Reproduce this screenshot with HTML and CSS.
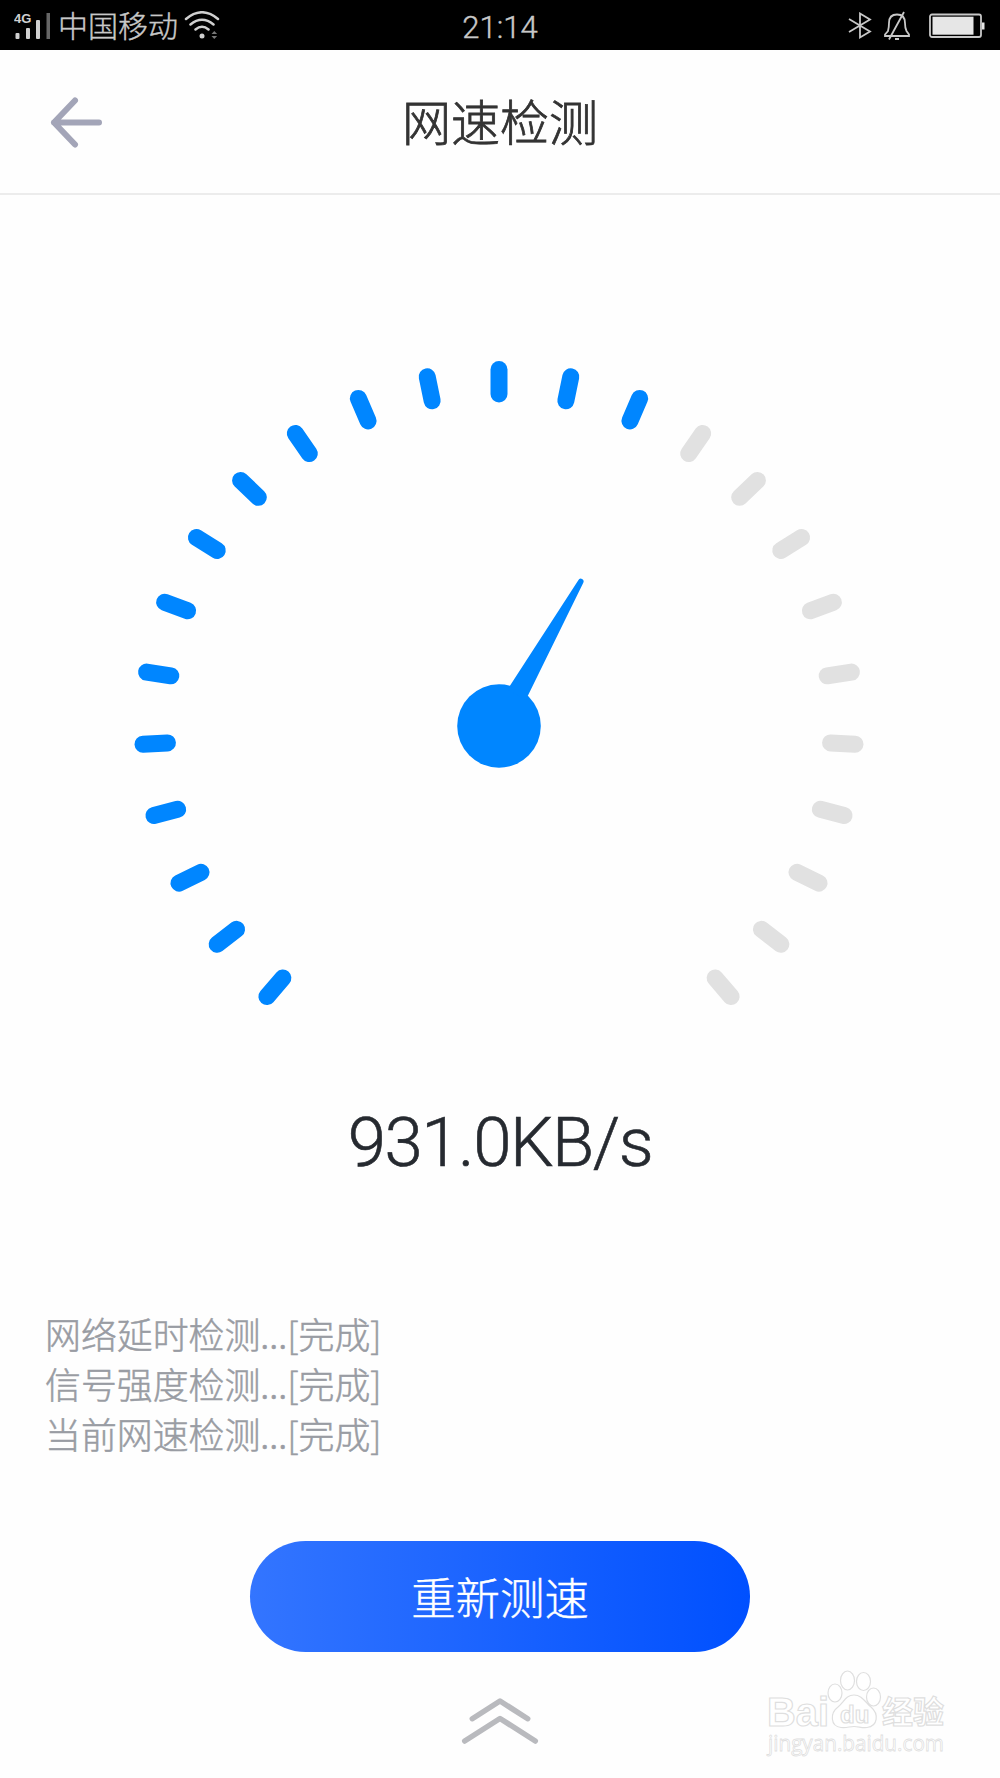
FILE: index.html
```
<!DOCTYPE html>
<html lang="zh-CN">
<head>
    <meta charset="UTF-8">
    <meta name="viewport" content="width=device-width, initial-scale=1.0">
    <title>网速检测</title>
    <link rel="stylesheet" href="styles.css">
</head>
<body>
<div id="wrap">
    <div class="status">
        <div class="st_left">
            <svg class="ic_signal" width="37" height="30" viewBox="0 0 37 30">
                <text x="0" y="12" class="net">4G</text>
                <rect x="1.5" y="22" width="4" height="6" rx="1"/>
                <rect x="12" y="17" width="4" height="11" rx="1"/>
                <rect x="22" y="9" width="4" height="19" rx="1"/>
                <rect x="32.5" y="2" width="3.5" height="26" class="dim"/>
            </svg>
            <span class="carrier">中国移动</span>
            <svg class="ic_wifi" width="36" height="30" viewBox="0 0 36 30">
                <path d="M2 8Q18 -5.500 34 8M6.500 13.500Q18 4 29.500 13.500M11.500 18.500Q18 13 24.500 18.500"/>
                <circle cx="18" cy="25" r="2.500"/>
                <path class="arr" d="M27.500 23l2.800-3 2.800 3zM27.500 25l2.800 3 2.800-3z"/>
            </svg>
        </div>
        <div class="time">21:14</div>
        <div class="st_right">
            <svg class="ic_bt" width="24" height="28" viewBox="0 0 24 28">
                <path d="M1 7L22 19.500 12 25.500V1.500L22 7.500 1 20"/>
            </svg>
            <svg class="ic_bell" width="28" height="30" viewBox="0 0 28 30">
                <path d="M5 20Q6 16 6 12Q6 3.500 14 3.500Q22 3.500 22 12Q22 17 23.500 20L26 23.500V25H2V23.500ZM21 1L6 28.500M12 28H16"/>
            </svg>
            <svg class="ic_bat" width="56" height="26" viewBox="0 0 56 26">
                <rect x="1" y="1.500" width="51" height="22.500" rx="2"/>
                <rect x="3.500" y="3.700" width="41" height="18" class="fill"/>
                <rect x="53" y="9.500" width="2.500" height="7" class="fill"/>
            </svg>
        </div>
    </div>

    <header class="header">
        <svg class="btn_back" width="54" height="52" viewBox="0 0 54 52">
            <path d="M26 4.500L5 26.500L26 48.500M5 26.500H50"/>
        </svg>
        <h1 class="title">网速检测</h1>
    </header>

    <main class="main">
        <svg class="gauge" width="730" height="650" viewBox="-365 -365 730 650">
            <g id="ticks"></g>
            <circle class="needle" r="41.800"/>
            <path class="needle" d="M-10.500 -36L-2.800 -166A2.800 2.800 0 0 1 2.800 -166L10.500 -36Z" transform="rotate(29.500)"/>
        </svg>
        <div class="speed">931.0KB/s</div>
        <ul class="list">
            <li>网络延时检测...[完成]</li>
            <li>信号强度检测...[完成]</li>
            <li>当前网速检测...[完成]</li>
        </ul>
        <button class="btn_test">重新测速</button>
        <svg class="ic_up" width="78" height="48" viewBox="0 0 78 48">
            <path d="M11.300 22.700L39 5L66.700 22.700M3.700 45L39 22.500L74.300 45"/>
        </svg>
    </main>

    <svg class="mark" width="210" height="110" viewBox="0 0 210 110">
        <text x="17" y="66" class="m_bai" textLength="62" lengthAdjust="spacingAndGlyphs">Bai</text>
        <ellipse cx="85" cy="33" rx="7" ry="9"/>
        <ellipse cx="97.500" cy="20.500" rx="7" ry="9.500"/>
        <ellipse cx="113.500" cy="21.500" rx="7" ry="9"/>
        <ellipse cx="123.500" cy="37" rx="7" ry="9"/>
        <path d="M104 35C96 35 94 42 88 47C80 53 80 66 91 67.500C98 68 99 66.500 104 66.500C109 66.500 111 68 117 67.500C128 66 129 54 121 47C115 42 112 35 104 35Z"/>
        <text x="90" y="62.500" class="m_du">du</text>
        <text x="132" y="63" class="m_cn">经验</text>
        <text x="18" y="91" class="m_url" textLength="176" lengthAdjust="spacingAndGlyphs">jingyan.baidu.com</text>
    </svg>
</div>

<script>
    // 25 ticks, the first 15 are lit
    let ticks = document.getElementById('ticks')
    let html = ''
    for(let i=0; i<25; i++) {
        let deg = (i - 12) * 11.615
        html += `<rect class="tick ${i < 15 ? 'on' : ''}" x="-8.500" y="-365" width="17" height="41.500" rx="8.500" transform="rotate(${deg})"/>`
    }
    ticks.innerHTML = html
</script>
</body>
</html>
```
FILE: styles.css
```
body {
    margin: 0;
    background: #fefefe;
    font-family: Roboto, "Noto Sans CJK SC", sans-serif;
    font-weight: 300;
}
ul {
    list-style: none;
    padding: 0;
    margin: 0;
}
svg { display: block; }

#wrap {
    width: 1000px;
    height: 1778px;
    position: relative;
    overflow: hidden;
}

/* status bar */
.status {
    height: 50px;
    box-sizing: border-box;
    padding: 0 15px 0 14px;
    background: #000;
    color: #c8c8c8;
    display: grid;
    grid-template-columns: 1fr auto 1fr;
    align-items: center;
}
.st_left, .st_right {
    display: flex;
    align-items: center;
}
.st_right { justify-content: flex-end; }
.ic_signal { fill: #d0d0d0; }
.ic_signal .net {
    font: bold 13px "Liberation Sans", sans-serif;
}
.ic_signal .dim { fill: #666; }
.carrier {
    margin-left: 7px;
    font-size: 30px;
    line-height: 49px;
    -webkit-text-stroke: 0.4px;
}
.ic_wifi {
    margin-left: 6px;
    fill: #d0d0d0;
}
.ic_wifi path {
    fill: none;
    stroke: #d0d0d0;
    stroke-width: 2.5;
    stroke-linecap: round;
}
.ic_wifi .arr {
    fill: #777;
    stroke: none;
}
.time {
    font-size: 31px;
    line-height: 48px;
    padding: 4px 0 0 1px;
    -webkit-text-stroke: 0.4px;
}
.ic_bt, .ic_bell {
    fill: none;
    stroke: #c8c8c8;
    stroke-width: 1.8;
}
.ic_bell { margin: 0 18px 0 11px; }
.ic_bat {
    margin-bottom: 1px;
    fill: none;
    stroke: #c8c8c8;
    stroke-width: 1.8;
}
.ic_bat .fill {
    fill: #e6e6e6;
    stroke: none;
}

/* header */
.header {
    height: 145px;
    box-sizing: border-box;
    border-bottom: 2px solid #ececec;
    padding: 0 49px;
    display: grid;
    grid-template-columns: 54px 1fr 54px;
    align-items: center;
}
.btn_back {
    fill: none;
    stroke: #a3a5b8;
    stroke-width: 6;
    stroke-linecap: round;
    stroke-linejoin: round;
}
.title {
    margin: 0;
    padding-bottom: 4px;
    text-align: center;
    font-size: 49px;
    font-weight: 300;
    color: #333;
    -webkit-text-stroke: 0.8px;
}

/* content */
.main {
    display: flex;
    flex-direction: column;
    align-items: center;
}
.gauge {
    margin: 166px 2px 0 0;
}
.tick { fill: #e1e1e1; }
.tick.on, .needle { fill: #0086ff; }
.speed {
    margin-top: 92px;
    height: 80px;
    line-height: 80px;
    font-size: 69px;
    letter-spacing: -1.5px;
    color: #262a30;
    -webkit-text-stroke: 0.6px;
}
.list {
    align-self: stretch;
    margin-top: 125px;
    padding-left: 45px;
    font-family: "Noto Sans CJK SC", sans-serif;
    font-size: 35.9px;
    line-height: 50px;
    color: #999ca3;
    -webkit-text-stroke: 0.5px;
}
.list li { height: 50px; }
.btn_test {
    width: 500px;
    height: 111px;
    margin-top: 83px;
    padding: 0 0 2px;
    border: 0;
    border-radius: 56px;
    background: linear-gradient(90deg, #3375ff, #0050ff);
    color: #fff;
    font-family: inherit;
    font-weight: 300;
    font-size: 44.4px;
    -webkit-text-stroke: 0.4px;
}
.ic_up {
    margin-top: 44px;
    fill: none;
    stroke: #b9babe;
    stroke-width: 5.5;
    stroke-linecap: round;
    stroke-linejoin: round;
}

/* watermark over the bottom corner */
.mark {
    position: absolute;
    left: 750px;
    top: 1660px;
    fill: #fff;
    stroke: #dfdfdf;
    stroke-width: 1.2;
}
.m_bai { font: bold 41px "Liberation Sans", sans-serif; }
.m_du { font: bold 24px "Liberation Sans", sans-serif; }
.m_cn { font: bold 31px "Noto Sans CJK SC", sans-serif; }
.m_url {
    font: 400 22px "Open Sans", sans-serif;
    stroke-width: 0.8;
}
```
